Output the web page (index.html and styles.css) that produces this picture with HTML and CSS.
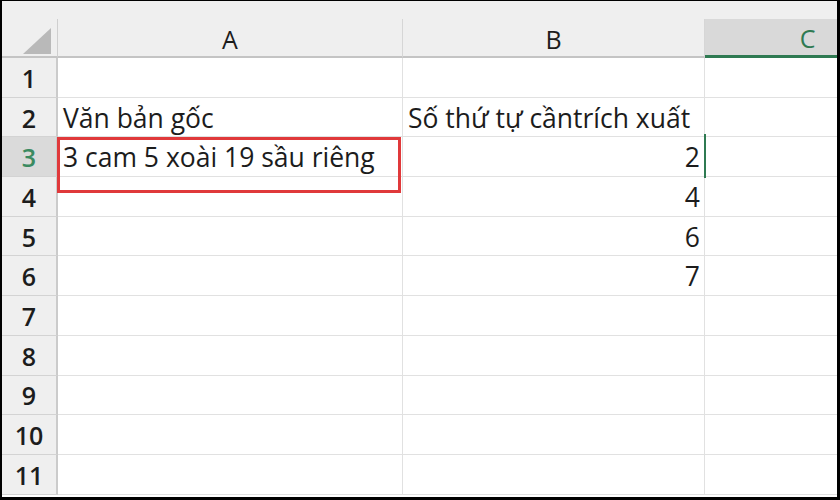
FILE: index.html
```html
<!DOCTYPE html>
<html lang="vi">
<head>
<meta charset="utf-8">
<title>Sheet</title>
<link rel="stylesheet" href="styles.css">
</head>
<body>
<div class="frame">
  <div class="topband"></div>
  <div class="sheet">
    <div class="corner"><svg width="30" height="26" viewBox="0 0 30 26"><polygon points="28,0 28,26 0,26" fill="#b9b9b9"/></svg></div>
    <div class="colhead">A</div>
    <div class="colhead">B</div>
    <div class="colhead sel">C</div>

    <div class="rowhead">1</div><div class="cell"></div><div class="cell"></div><div class="cell"></div>
    <div class="rowhead">2</div><div class="cell">Văn bản gốc</div><div class="cell">Số thứ tự cầntrích xuất</div><div class="cell"></div>
    <div class="rowhead sel">3</div><div class="cell boxed">3 cam 5 xoài 19 sầu riêng<span class="redbox"></span></div><div class="cell num cursor">2</div><div class="cell"></div>
    <div class="rowhead">4</div><div class="cell"></div><div class="cell num">4</div><div class="cell"></div>
    <div class="rowhead">5</div><div class="cell"></div><div class="cell num">6</div><div class="cell"></div>
    <div class="rowhead">6</div><div class="cell"></div><div class="cell num">7</div><div class="cell"></div>
    <div class="rowhead">7</div><div class="cell"></div><div class="cell"></div><div class="cell"></div>
    <div class="rowhead">8</div><div class="cell"></div><div class="cell"></div><div class="cell"></div>
    <div class="rowhead">9</div><div class="cell"></div><div class="cell"></div><div class="cell"></div>
    <div class="rowhead">10</div><div class="cell"></div><div class="cell"></div><div class="cell"></div>
    <div class="rowhead">11</div><div class="cell"></div><div class="cell"></div><div class="cell"></div>
  </div>
</div>
</body>
</html>
```

FILE: styles.css
```css
html, body {
  margin: 0;
  padding: 0;
  background: #000;
  width: 840px;
  height: 500px;
  overflow: hidden;
}
.frame {
  margin: 1px 0 0 2px;
  width: 835px;
  height: 496px;
  background: #fff;
  overflow: hidden;
  font-family: "Open Sans", Lato, sans-serif;
  color: #1c1c1c;
}
.topband {
  height: 18px;
  background: #efefef;
}
.sheet {
  display: grid;
  grid-template-columns: 56px 345px 302px 206px;
  grid-template-rows: 39px repeat(11, 39.7px);
}
.sheet > div {
  box-sizing: border-box;
}
.corner {
  background: #efefef;
  border-right: 1px solid #cfcfcf;
  border-bottom: 2px solid #c4c4c4;
  display: flex;
  align-items: flex-start;
  justify-content: flex-end;
  padding: 9px 4px 0 0;
}
.colhead {
  background: #efefef;
  border-right: 1px solid #d6d6d6;
  border-bottom: 2px solid #c4c4c4;
  display: flex;
  align-items: center;
  justify-content: center;
  font-size: 25px;
  font-weight: 500;
  padding-top: 2px;
}
.colhead.sel {
  background: #d9d9d9;
  color: #2f7a52;
  border-bottom: 3px solid #2f7a52;
}
.rowhead {
  background: #efefef;
  border-right: 2px solid #cbcbcb;
  border-bottom: 1px solid #d3d3d3;
  display: flex;
  align-items: center;
  justify-content: center;
  font-size: 25px;
  font-weight: 600;
  padding-top: 1px;
}
.rowhead.sel {
  background: #dadada;
  color: #3b8a60;
}
.cell {
  border-right: 1px solid #e1e1e1;
  border-bottom: 1px solid #e1e1e1;
  display: flex;
  align-items: center;
  padding: 1px 5px 0 5px;
  font-size: 26.5px;
  font-weight: 500;
  white-space: nowrap;
  position: relative;
}
.cell.num {
  justify-content: flex-end;
  padding-right: 4px;
}
.redbox {
  position: absolute;
  left: -1px;
  top: 0px;
  width: 344px;
  height: 56px;
  box-sizing: border-box;
  border: 3px solid #e0393b;
  z-index: 2;
}
.cursor::after {
  content: "";
  position: absolute;
  right: -2px;
  top: -3px;
  width: 2px;
  height: 44px;
  background: #2f7a52;
  z-index: 2;
}
```
